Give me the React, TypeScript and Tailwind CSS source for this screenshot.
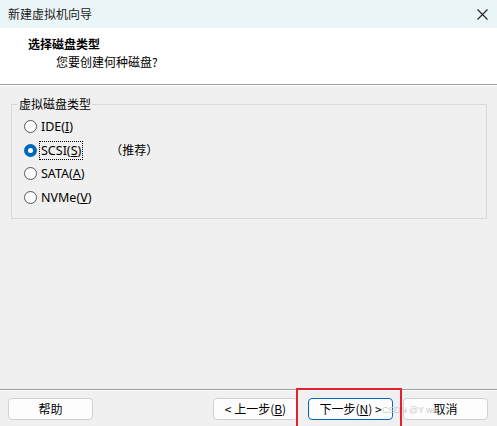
import React from "react";

const cjk = '"Noto Sans CJK SC", "Noto Sans", sans-serif';

const options = [
	{ label: "IDE(", key: "I", tail: ")" },
	{ label: "SCSI(", key: "S", tail: ")", note: "（推荐）" },
	{ label: "SATA(", key: "A", tail: ")" },
	{ label: "NVMe(", key: "V", tail: ")" },
];

const Radio = ({ checked }: { checked?: boolean }) =>
	checked ? (
		<span className="flex h-[13px] w-[13px] items-center justify-center rounded-full bg-[#0067c0]">
			<span className="h-[5px] w-[5px] rounded-full bg-white" />
		</span>
	) : (
		<span className="h-[13px] w-[13px] rounded-full border border-[#555] bg-[#fdfdfd]" />
	);

const Button = ({
	children,
	primary,
}: {
	children: React.ReactNode;
	primary?: boolean;
}) => (
	<button
		className={
			"flex h-[22px] w-[85px] items-center justify-center rounded-[4px] bg-[#fdfdfd] text-[12px] text-black " +
			(primary ? "border border-[#0067c0]" : "border border-[#d0d0d0]")
		}
	>
		{children}
	</button>
);

export default function App() {
	return (
		<div
			className="relative flex h-[426px] w-[497px] flex-col overflow-hidden bg-[#f0f0f0] text-[12px] text-black"
			style={{ fontFamily: cjk }}
		>
			{/* title bar */}
			<div className="flex h-[28px] items-center justify-between bg-[#eaf5f8] pl-[8px] pr-[9px]">
				<span className="text-[12px] text-[#1a1a1a]">新建虚拟机向导</span>
				<svg width="11" height="11" viewBox="0 0 11 11">
					<path d="M0.5 0.5 L10.5 10.5 M10.5 0.5 L0.5 10.5" stroke="#222" strokeWidth="1.1" />
				</svg>
			</div>

			{/* header */}
			<div className="flex h-[56px] flex-col bg-white pl-[28px] pt-[7px]">
				<span className="text-[12px] font-bold leading-[18px]">选择磁盘类型</span>
				<span className="pl-[28px] text-[12px] leading-[18px]">您要创建何种磁盘?</span>
			</div>
			<div className="h-px bg-[#a0a0a0]" />
			<div className="h-px bg-white" />

			{/* body */}
			<div className="flex-1 px-[11px] pt-[18px]">
				<div className="relative h-[115px] w-[476px] border border-[#d8d8d8]">
					<span className="absolute left-[6px] top-[-10px] bg-[#f0f0f0] px-[1px] leading-[18px]">
						虚拟磁盘类型
					</span>
					<div className="flex flex-col gap-[4.5px] pl-[12px] pt-[12px]">
						{options.map((o, i) => (
							<div key={o.key} className="flex h-[19px] items-center">
								<Radio checked={i === 1} />
								<span
									className={
										"ml-[3px] px-[1px] text-[12.5px] leading-[17px] " +
										(i === 1 ? "outline outline-1 outline-dotted outline-black" : "")
									}
									style={{ fontFamily: '"Noto Sans", "Noto Sans CJK SC", sans-serif' }}
								>
									{o.label}
									<span className="underline">{o.key}</span>
									{o.tail}
								</span>
								{o.note && <span className="ml-[28px]">{o.note}</span>}
							</div>
						))}
					</div>
				</div>
			</div>

			{/* footer */}
			<div className="h-px bg-[#a0a0a0]" />
			<div className="h-px bg-white" />
			<div className="flex h-[35px] items-center pl-[8px] pr-[9px]">
				<Button>帮助</Button>
				<div className="ml-auto flex gap-[10px]">
					<Button>
						&lt; 上一步(<span className="underline">B</span>)
					</Button>
					<Button primary>
						下一步(<span className="underline">N</span>) &gt;
					</Button>
					<Button>取消</Button>
				</div>
			</div>

			{/* watermark + highlight */}
			<span
				className="pointer-events-none absolute left-[382px] top-[404px] text-[9px] tracking-[-0.2px] text-[#cdcdcd]"
				style={{ fontFamily: '"Liberation Sans", sans-serif' }}
			>
				CSDN @Y wa
			</span>
			<div className="pointer-events-none absolute left-[296px] top-[388px] h-[40px] w-[106px] border-2 border-[#e4202c]" />
		</div>
	);
}
